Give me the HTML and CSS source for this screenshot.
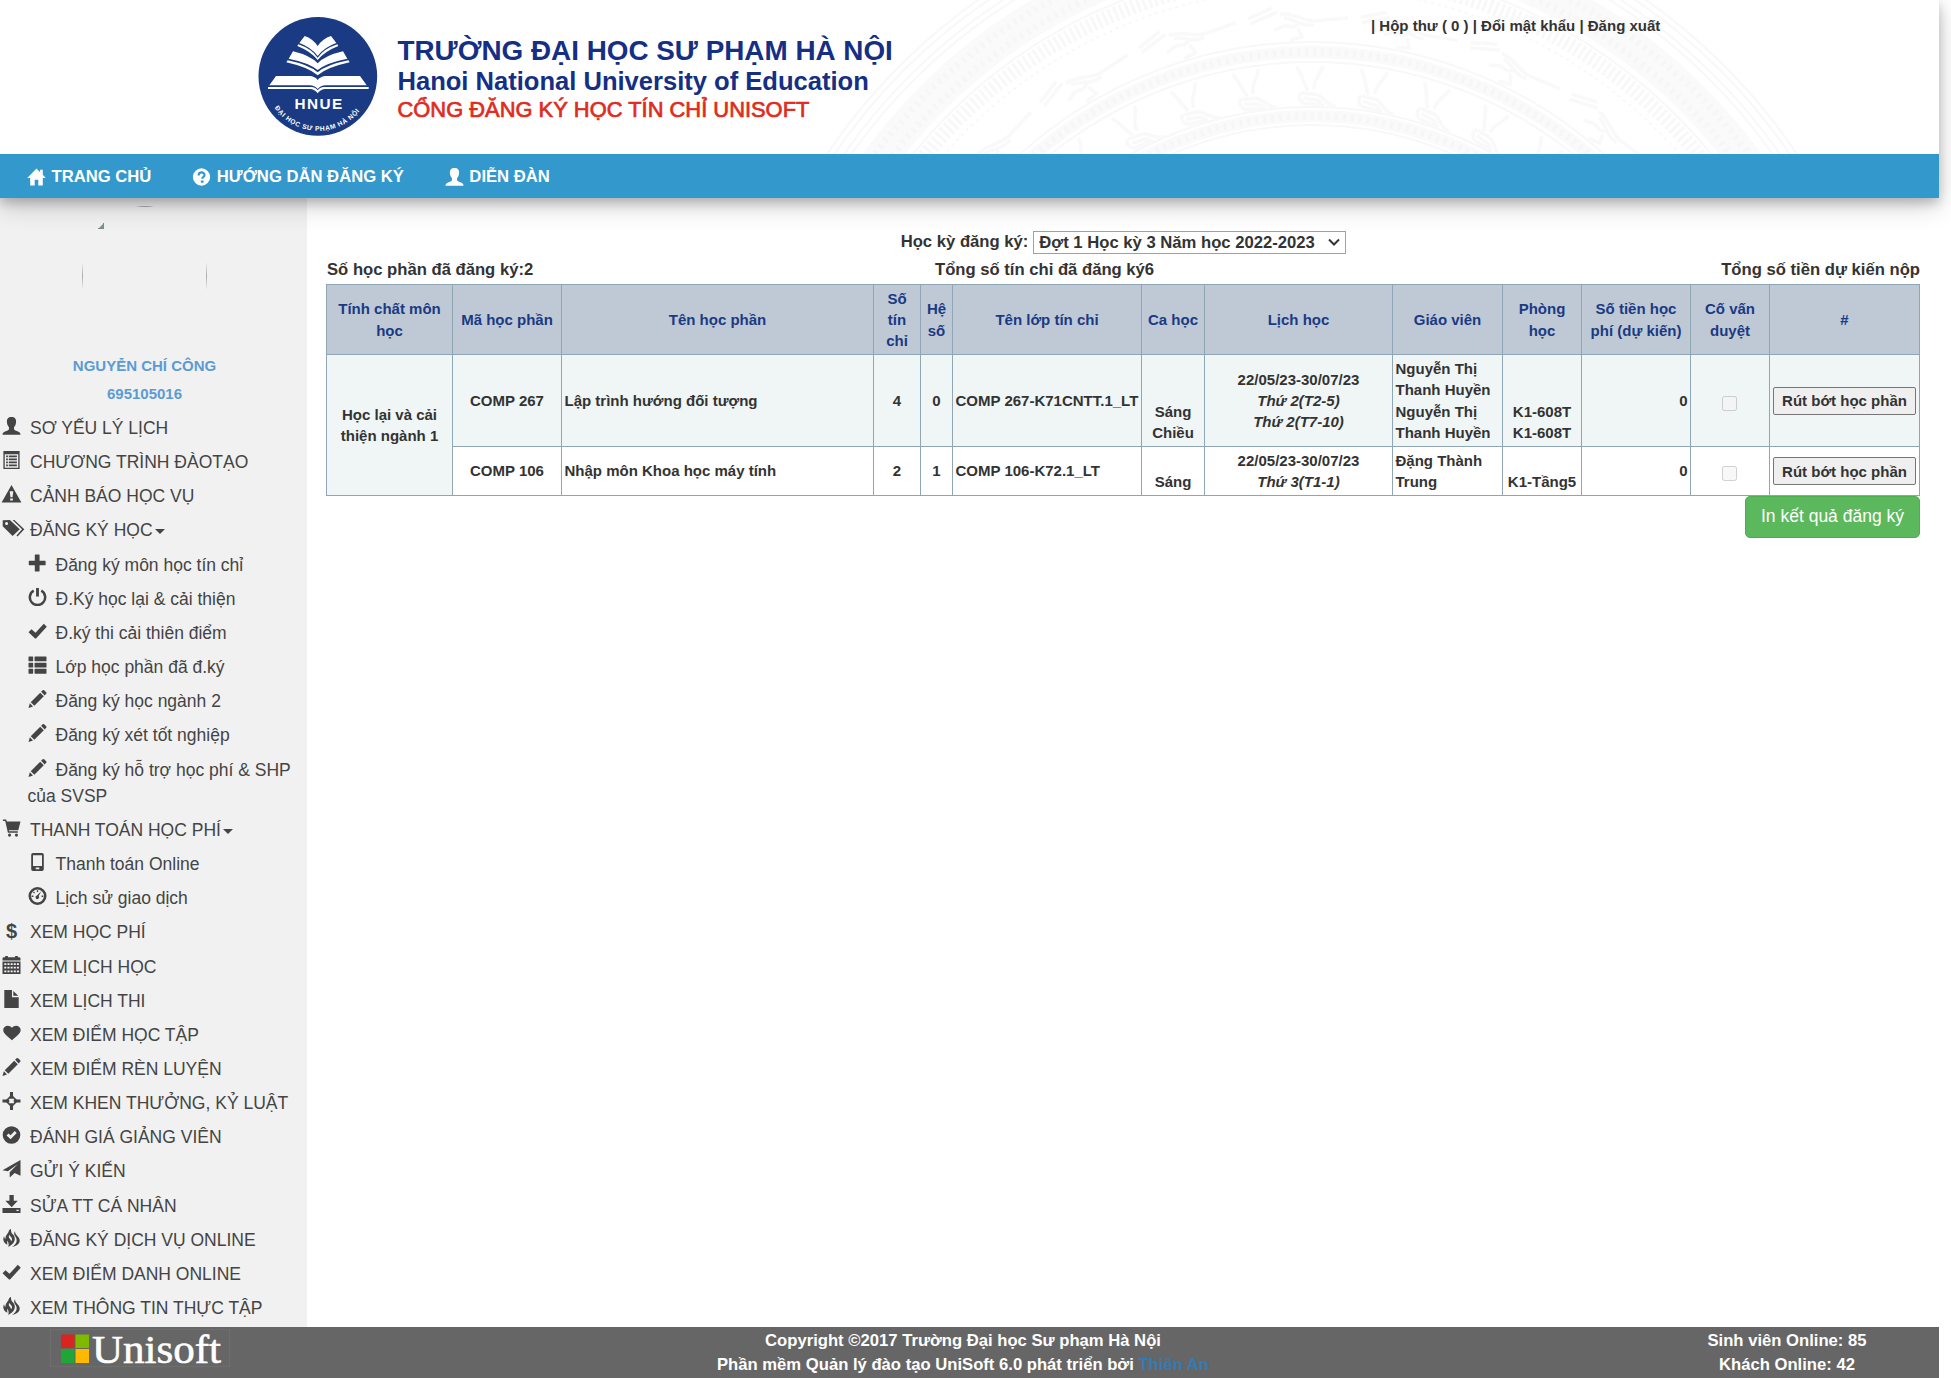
FILE: index.html
```html
<!DOCTYPE html>
<html lang="vi">
<head>
<meta charset="utf-8">
<title>Cổng đăng ký học tín chỉ Unisoft</title>
<link rel="stylesheet" href="styles.css">
</head>
<body>
<svg class="sprite" aria-hidden="true">
  <symbol id="home" viewBox="0 0 20 20"><path d="M10 .5-.3 11H3v8.500h5V13h4v6.500h5V11h3.300l-3.300-3.500V2h-3v2.600z"/></symbol>
  <symbol id="question" viewBox="0 0 20 20"><circle cx="10" cy="10" r="9.600"/><path class="cut" d="M6.800 8.200c0-4.300 6.600-4.300 6.600-.5 0 2.300-2.600 2.300-2.600 4.300M9.300 15.200h3"/></symbol>
  <symbol id="user" viewBox="0 0 20 20"><path d="M10 0C6.200 0 4.700 2.300 4.900 5.500c.2 3 1.200 4.600 2.300 5.800v2.400c-.3 1.500-3.400 2-5.400 2.900C.7 17.200 0 18 0 19.700h20c0-1.700-.7-2.500-1.800-3.100-2-.9-5.100-1.400-5.400-2.900v-2.400c1.100-1.200 2.100-2.800 2.300-5.800C15.300 2.300 13.800 0 10 0z"/></symbol>
  <symbol id="listalt" viewBox="0 0 20 20"><path fill-rule="evenodd" d="M1 0h18v20H1zM2.500 3.500v15h15v-15z"/><path d="M4 5h2v2H4zm3 0h9v2H7zM4 8.300h2v2H4zm3 0h9v2H7zm-3 3.300h2v2H4zm3 0h9v2H7zM4 15h2v2H4zm3 0h9v2H7z"/></symbol>
  <symbol id="warning" viewBox="0 0 22 20"><path fill-rule="evenodd" d="M11 0 22 19.500H0zM9 7l.9 6.500h2.200L13 7zM9.500 15v2.200h3V15z"/></symbol>
  <symbol id="tags" viewBox="0 0 24 20"><path fill-rule="evenodd" d="M0 1.500V8l11 11 8-7.500L8 1zM4.300 3.300a1.700 1.700 0 1 1 0 3.400 1.700 1.700 0 0 1 0-3.400z"/><path d="M11 1h2l11 10.500-7.500 8-1.200-1.200 6.200-6.800z"/></symbol>
  <symbol id="plus" viewBox="0 0 20 20"><path d="M7 1Q7 .5 7.500.5h4.300q.5 0 .5.500v6.500h6.200q.5 0 .5.500v4q0 .5-.5.500h-6.200V19q0 .5-.5.500H7.500Q7 19.500 7 19v-6.500H.8q-.5 0-.5-.5V8q0-.5.500-.5H7z"/></symbol>
  <symbol id="off" viewBox="0 0 20 20"><path class="line" d="M5.800 3a8.500 8.500 0 1 0 8.400 0"/><path d="M8.400 0h3.200v9.500H8.400z"/></symbol>
  <symbol id="ok" viewBox="0 0 20 20"><path d="m17 2 3.300 3.300L8.600 18q-.8.800-1.600 0L0 11.300 3.300 8 7.800 12z"/></symbol>
  <symbol id="thlist" viewBox="0 0 20 20"><path d="M.7.500H4.500q.7 0 .7.700v4q0 .7-.7.700H.7Q0 5.900 0 5.200v-4Q0 .5.700.5zm6.700 0h12q.6 0 .6.700v4q0 .7-.6.700h-12q-.7 0-.7-.7v-4q0-.7.700-.7zM.7 7.400h3.800q.7 0 .7.700v4q0 .7-.7.700H.7q-.7 0-.7-.7v-4q0-.7.700-.7zm6.700 0h12q.6 0 .6.700v4q0 .7-.6.700h-12q-.7 0-.7-.7v-4q0-.7.700-.7zM.7 14.300h3.800q.7 0 .7.700v4q0 .7-.7.700H.7Q0 19.700 0 19v-4q0-.7.700-.7zm6.700 0h12q.6 0 .6.700v4q0 .7-.6.700h-12q-.7 0-.7-.7v-4q0-.7.700-.7z"/></symbol>
  <symbol id="pencil" viewBox="0 0 20 20"><path d="M0 20l1.500-5.200L5 18.200zM2.500 13.500 13 3l4 4L6.500 17.500zM14 2 15.700.4q.9-.8 1.700 0l2.200 2.200q.8.800 0 1.700L18 6z"/></symbol>
  <symbol id="cart" viewBox="0 0 20 20"><path d="M.5.500H4l1 2.200h15l-2.500 9.800H7l.4 1.200H17v1.600H6L3 2.200H.5z"/><circle cx="7.800" cy="17.900" r="1.700"/><circle cx="15.500" cy="17.900" r="1.700"/></symbol>
  <symbol id="phone" viewBox="0 0 20 20"><path fill-rule="evenodd" d="M5 0h10q2 0 2 2v16q0 2-2 2H5q-2 0-2-2V2q0-2 2-2zm0 2.500v12h10v-12zM8 16v2h4v-2z"/></symbol>
  <symbol id="dashboard" viewBox="0 0 20 20"><circle class="line" cx="10" cy="10" r="8.600"/><path d="M9.200 3.500h1.600v2H9.200zM5 6l1-1 1.300 1.300-1 1zM3.500 9.500h2V11h-2zM14.500 9.500h2V11h-2zM14.300 4.700l-3 5.300a2 2 0 1 1-2-.6z"/></symbol>
  <symbol id="calendar" viewBox="0 0 20 20"><path fill-rule="evenodd" d="M0 6h20v14H0zm2 2v2h2.300V8zm3.500 0v2h2.300V8zM9 8v2h2.300V8zm3.500 0v2h2.300V8zM16 8v2h2.300V8zM2 12v2h2.300v-2zm3.500 0v2h2.300v-2zM9 12v2h2.300v-2zm3.500 0v2h2.300v-2zm3.500 0v2h2.300v-2zM2 16v2h2.300v-2zm3.500 0v2h2.300v-2zM9 16v2h2.300v-2zm3.500 0v2h2.300v-2zm3.500 0v2h2.300v-2z"/><path d="M0 5V3Q0 1.500 1.500 1.500H3V0h3v1.500h8V0h3v1.500h1.500Q20 1.500 20 3v2z"/></symbol>
  <symbol id="file" viewBox="0 0 20 20"><path d="M2 0h8.500v8H18v12H2zM12 1l5.500 5.500H12z"/></symbol>
  <symbol id="heart" viewBox="0 0 20 20"><path d="M10.500 18C6.500 14.500.8 11 .8 6.800.8 1.500 7.700.2 10.500 4.300 13.300.2 20.200 1.500 20.200 6.800c0 4.200-5.700 7.700-9.700 11.200z"/></symbol>
  <symbol id="target" viewBox="0 0 20 20"><path class="thin" d="M10 4 16 10 10 16 4 10z"/><path d="M8.300 0h3.400v7.500H8.300zm0 12.500h3.400V20H8.300zM0 8.300h7.500v3.400H0zm12.500 0H20v3.400h-7.500z"/></symbol>
  <symbol id="oksign" viewBox="0 0 20 20"><path fill-rule="evenodd" d="M10 .2a9.800 9.800 0 1 1 0 19.600A9.800 9.800 0 0 1 10 .2zm3.600 5.300L9 10.300 6.700 8.200 4.500 10.500 9 14.700l6.800-6.900z"/></symbol>
  <symbol id="send" viewBox="0 0 20 20"><path d="M20 0v17.500l-6.500-3-5.500 5v-6L17 4.500 6 12.500 0 11.500z"/></symbol>
  <symbol id="download" viewBox="0 0 20 20"><path d="M7.700 0h4.800v6.500H17L10.200 13.500 3.200 6.500h4.500z"/><path fill-rule="evenodd" d="M0 14.500h20V20H0zm15.500 2v1.300H18v-1.300z"/></symbol>
  <symbol id="fire" viewBox="0 0 20 20"><path d="M9.500 0c-.3 3 .5 4.500 2.200 6.200 1.800 1.900 2.300 3.800 1.800 6.300-.6 3-3.500 5.500-7 7.500.8-3.500.3-5-1.200-7-.3 1.500.2 3 0 4.500C1.500 15.500-.3 11.500 1.800 8c.2 1.500.7 2.500 1.500 3C3.200 6.500 6.500 5 7 2.200 7.300 1.200 8.500.3 9.500 0zM7.700 6C6.500 8 7 9.500 8.200 10.800c1 1.100 1.300 2 1.200 3.200 2.200-2.700 1-4.200-.2-5.500C8.300 7.700 7.700 7 7.700 6z"/><path d="M14 2.500c-.2 2.700 1 3.700 2.700 5.500C19 10.300 19.700 12.500 18.700 15c-1 2.500-4 4.200-8.200 5 3-2 4.800-4 5.200-6.500.3-2.500-.5-4-1.700-5.500C12.500 6 12.700 4 14 2.500z"/></symbol>
</svg>

<header class="top">
  <div class="banner">
    <svg class="drum" viewBox="0 0 1100 154" aria-hidden="true">
      <defs>
        <g id="deer"><path d="M531 92c-6-8-7-17-13-23M537 90c-2-10 6-14 7-24M525 94c8 3 12-2 19 3s8 8 16 9M527 99c8 3 12-1 18 4M524 94c-3 5-1 9 4 11h20"/></g>
        <g id="bird"><path d="M498 19l24-11M500 24l27-12M530 14c12-2 20 6 34 7l34-3M534 18c10 0 16 9 30 7M524 30c6 0 8-6 14-4s7 0 10-2M548 28l4 9-12 3"/></g>
      </defs>
      <g class="rings" transform="translate(562 478)">
        <circle r="583"/><circle r="577"/><circle r="569"/><circle r="563"/>
        <circle class="band" r="537"/><circle class="chain" r="544"/><circle class="chain" r="529"/>
        <circle class="comb" r="504"/><circle r="514"/><circle class="dots" r="490"/>
        <circle r="436"/><circle class="band slim" r="426"/><circle class="chain" r="426"/><circle r="416"/>
        <circle r="371"/><circle class="band slim" r="362"/><circle class="chain" r="362"/><circle r="353"/>
      </g>
      <g class="figures">
        <use href="#deer" transform="rotate(-41 562 478)"/><use href="#deer" transform="rotate(-32 562 478)"/><use href="#deer" transform="rotate(-23 562 478)"/><use href="#deer" transform="rotate(-14 562 478)"/><use href="#deer" transform="rotate(-5 562 478)"/><use href="#deer" transform="rotate(4 562 478)"/><use href="#deer" transform="rotate(13 562 478)"/><use href="#deer" transform="rotate(22 562 478)"/><use href="#deer" transform="rotate(31 562 478)"/><use href="#deer" transform="rotate(40 562 478)"/>
        <use href="#bird" transform="rotate(-42 562 478)"/><use href="#bird" transform="rotate(-28 562 478)"/><use href="#bird" transform="rotate(-14 562 478)"/><use href="#bird" transform="rotate(0 562 478)"/><use href="#bird" transform="rotate(14 562 478)"/><use href="#bird" transform="rotate(28 562 478)"/><use href="#bird" transform="rotate(42 562 478)"/>
      </g>
    </svg>
    <svg class="crest" viewBox="0 0 420 408" role="img" aria-label="HNUE">
      <circle cx="203.500" cy="205" r="178" fill="#1a3a83"/>
      <g fill="#fff">
        <path d="M164 84Q188 92 203 114 218 92 243 84L259 105Q222 118 203 144 184 118 148 105z"/>
        <path d="M145 109Q184 122 203 149 222 122 262 109L265 114Q224 130 203 156 182 130 142 114z"/>
        <path d="M129 130Q180 142 203 166 226 142 279 130L292 152Q230 164 203 186 176 164 116 152z"/>
        <path d="M113 157Q176 170 203 193 230 170 295 157L299 163Q230 178 203 202 176 178 109 163z"/>
        <path d="M78 204H178Q195 205 203 216 211 205 228 204H330L350 232H228Q211 233 203 243 195 233 178 232H58z"/>
        <path d="M54 237H184Q197 238 203 247 209 238 222 237H356V243H224Q210 245 203 256 196 245 182 243H54z"/>
        <text x="205" y="302" text-anchor="middle" class="crest-name" textLength="143">HNUE</text>
        <path id="arc" d="M74 299A158 158 0 0 0 336 299" fill="none"/>
        <text class="crest-arc"><textPath href="#arc" textLength="296">ĐẠI HỌC SƯ PHẠM HÀ NỘI</textPath></text>
      </g>
    </svg>
    <div class="titles">
      <div class="t1">TRƯỜNG ĐẠI HỌC SƯ PHẠM HÀ NỘI</div>
      <div class="t2">Hanoi National University of Education</div>
      <div class="t3">CỔNG ĐĂNG KÝ HỌC TÍN CHỈ UNISOFT</div>
    </div>
    <div class="account">| Hộp thư ( 0 ) | Đổi mật khẩu | Đăng xuất</div>
  </div>
  <nav class="nav">
    <a><svg><use href="#home"/></svg>TRANG CHỦ</a>
    <a><svg><use href="#question"/></svg>HƯỚNG DẪN ĐĂNG KÝ</a>
    <a><svg><use href="#user"/></svg>DIỄN ĐÀN</a>
  </nav>
</header>

<div class="page">
  <aside class="side">
    <div class="profile">
      <svg class="avatar" viewBox="0 0 126 126" aria-hidden="true">
        <defs>
          <linearGradient id="fv" x2="0" y2="1"><stop stop-color="#aaa" stop-opacity="0"/><stop offset=".5" stop-color="#aaa"/><stop offset="1" stop-color="#aaa" stop-opacity="0"/></linearGradient>
        </defs>
        <path d="M54 1Q63-1 72 1z" fill="#aaa"/>
        <rect x="0" y="56" width="1" height="28" fill="url(#fv)"/><rect x="124" y="56" width="1" height="28" fill="url(#fv)"/>
        <path d="M16 23 22 17V23z" fill="#789a80"/><path d="M21 17h1v6h-6v-1h5z" fill="#888"/>
      </svg>
      <div>NGUYỄN CHÍ CÔNG</div>
      <div>695105016</div>
    </div>
    <ul class="menu">
      <li><svg><use href="#user"/></svg>SƠ YẾU LÝ LỊCH</li>
      <li><svg><use href="#listalt"/></svg>CHƯƠNG TRÌNH ĐÀOTẠO</li>
      <li><svg class="w20"><use href="#warning"/></svg>CẢNH BÁO HỌC VỤ</li>
      <li><svg class="w22"><use href="#tags"/></svg>ĐĂNG KÝ HỌC<i class="caret"></i></li>
      <li class="sub"><svg><use href="#plus"/></svg>Đăng ký môn học tín chỉ</li>
      <li class="sub"><svg><use href="#off"/></svg>Đ.Ký học lại &amp; cải thiện</li>
      <li class="sub"><svg><use href="#ok"/></svg>Đ.ký thi cải thiên điểm</li>
      <li class="sub"><svg><use href="#thlist"/></svg>Lớp học phần đã đ.ký</li>
      <li class="sub"><svg><use href="#pencil"/></svg>Đăng ký học ngành 2</li>
      <li class="sub"><svg><use href="#pencil"/></svg>Đăng ký xét tốt nghiệp</li>
      <li class="sub"><svg><use href="#pencil"/></svg>Đăng ký hỗ trợ học phí &amp; SHP<br>của SVSP</li>
      <li><svg><use href="#cart"/></svg>THANH TOÁN HỌC PHÍ<i class="caret"></i></li>
      <li class="sub"><svg><use href="#phone"/></svg>Thanh toán Online</li>
      <li class="sub"><svg><use href="#dashboard"/></svg>Lịch sử giao dịch</li>
      <li><b class="usd">$</b>XEM HỌC PHÍ</li>
      <li><svg><use href="#calendar"/></svg>XEM LỊCH HỌC</li>
      <li><svg><use href="#file"/></svg>XEM LỊCH THI</li>
      <li><svg><use href="#heart"/></svg>XEM ĐIỂM HỌC TẬP</li>
      <li><svg><use href="#pencil"/></svg>XEM ĐIỂM RÈN LUYỆN</li>
      <li><svg><use href="#target"/></svg>XEM KHEN THƯỞNG, KỶ LUẬT</li>
      <li><svg><use href="#oksign"/></svg>ĐÁNH GIÁ GIẢNG VIÊN</li>
      <li><svg><use href="#send"/></svg>GỬI Ý KIẾN</li>
      <li><svg><use href="#download"/></svg>SỬA TT CÁ NHÂN</li>
      <li><svg><use href="#fire"/></svg>ĐĂNG KÝ DỊCH VỤ ONLINE</li>
      <li><svg><use href="#ok"/></svg>XEM ĐIỂM DANH ONLINE</li>
      <li><svg><use href="#fire"/></svg>XEM THÔNG TIN THỰC TẬP</li>
    </ul>
  </aside>

  <main class="main">
    <div class="term">Học kỳ đăng ký: <span class="pick"><select><option>Đợt 1 Học kỳ 3 Năm học 2022-2023</option></select><svg viewBox="0 0 12 8"><path d="M1 1.500 6 6.500 11 1.500"/></svg></span></div>
    <div class="totals"><span>Số học phần đã đăng ký:2</span><span>Tổng số tín chỉ đã đăng ký6</span><span>Tổng số tiền dự kiến nộp</span></div>
    <table class="grid">
      <colgroup><col class="c1"><col class="c2"><col class="c3"><col class="c4"><col class="c5"><col class="c6"><col class="c7"><col class="c8"><col class="c9"><col class="c10"><col class="c11"><col class="c12"><col class="c13"></colgroup>
      <tr><th>Tính chất môn học</th><th>Mã học phần</th><th>Tên học phần</th><th>Số<br>tín<br>chỉ</th><th>Hệ số</th><th>Tên lớp tín chỉ</th><th>Ca học</th><th>Lịch học</th><th>Giáo viên</th><th>Phòng học</th><th>Số tiền học phí (dự kiến)</th><th>Cố vấn duyệt</th><th>#</th></tr>
      <tr class="alt"><td rowspan="2">Học lại và cải thiện ngành 1</td><td>COMP 267</td><td class="l">Lập trình hướng đối tượng</td><td>4</td><td>0</td><td class="l">COMP 267-K71CNTT.1_LT</td><td class="low">Sáng<br>Chiều</td><td>22/05/23-30/07/23<br><em>Thứ 2(T2-5)</em><br><em>Thứ 2(T7-10)</em></td><td class="l">Nguyễn Thị<br>Thanh Huyền<br>Nguyễn Thị<br>Thanh Huyền</td><td class="low">K1-608T<br>K1-608T</td><td class="r">0</td><td><input type="checkbox" disabled></td><td><button>Rút bớt học phần</button></td></tr>
      <tr><td>COMP 106</td><td class="l">Nhập môn Khoa học máy tính</td><td>2</td><td>1</td><td class="l">COMP 106-K72.1_LT</td><td class="low">Sáng</td><td>22/05/23-30/07/23<br><em>Thứ 3(T1-1)</em></td><td class="l">Đặng Thành<br>Trung</td><td class="low">K1-Tầng5</td><td class="r">0</td><td><input type="checkbox" disabled></td><td><button>Rút bớt học phần</button></td></tr>
    </table>
    <div class="actions"><a class="print">In kết quả đăng ký</a></div>
  </main>
</div>

<footer class="foot">
  <svg class="unisoft" viewBox="0 0 180 38" role="img" aria-label="Unisoft">
    <rect x=".5" y=".5" width="179" height="37" fill="none" stroke="#6e6e6e"/>
    <path d="M11 5.500h13.500v13.500H11z" fill="#d9251d"/><path d="M25.500 5.500H39v13.500H25.500z" fill="#7fba00"/>
    <path d="M11 20h13.500v14H11z" fill="#1fa637"/><path d="M25.500 20H39v14H25.500z" fill="#ffb900"/>
    <text x="42" y="34" textLength="129" lengthAdjust="spacingAndGlyphs">Unisoft</text>
  </svg>
  <div class="copy">Copyright ©2017 Trường Đại học Sư phạm Hà Nội<br>Phần mềm Quản lý đào tạo UniSoft 6.0 phát triển bởi <a>Thiên An</a></div>
  <div class="online">Sinh viên Online: 85<br>Khách Online: 42</div>
</footer>
</body>
</html>
```
FILE: styles.css
```css
* { box-sizing: border-box; }
body {
  margin: 0;
  height: 1378px;
  overflow: hidden;
  display: flex;
  flex-direction: column;
  background: #fff;
  color: #333;
  font-family: "Liberation Sans", Arial, sans-serif;
}
.sprite { display: none; }
svg { overflow: visible; }

/* Header */
.top {
  position: relative;
  z-index: 1;
  flex: none;
  width: 1939px;
  background: #fff;
  box-shadow: 0 5px 10px rgba(0, 0, 0, .2), 0 7.5px 25px rgba(0, 0, 0, .19);
}
.banner { position: relative; display: flex; height: 154px; padding-left: 250px; }
.drum { position: absolute; left: 750px; top: 0; width: 1100px; height: 154px; overflow: hidden; }
.rings circle { fill: none; stroke: #f8f8f8; stroke-width: 2; }
.rings .band { stroke: #fafafa; stroke-width: 34; }
.rings .slim { stroke-width: 12; }
.rings .chain { stroke: #f6f6f6; stroke-width: 7; stroke-dasharray: 3 5; }
.rings .comb { stroke: #f8f8f8; stroke-width: 15; stroke-dasharray: 3 3; }
.rings .dots { stroke-dasharray: 3 4; }
.figures { fill: none; stroke: #f9f9f9; stroke-width: 3.5; }
.crest { flex: none; width: 140px; height: 136px; margin-top: 8px; }
.crest-name { font-size: 46px; font-weight: bold; }
.crest-arc { font-size: 20px; font-weight: bold; }
.titles { position: relative; flex: 1; padding: 36px 0 0 7.5px; white-space: nowrap; font-weight: bold; }
.t1 { font-size: 27.85px; line-height: 30px; color: #152f85; }
.t2 { font-size: 25.55px; line-height: 31px; color: #152f85; }
.t3 { font-size: 21.9px; line-height: 26px; color: #e02b20; font-weight: normal; -webkit-text-stroke: .7px #e02b20; }
.account { position: relative; width: 568px; padding-top: 15px; font-size: 15px; line-height: 21px; font-weight: bold; }
.nav { display: flex; gap: 41px; height: 44px; padding: 2px 0 0 27px; background: #3398cc; color: #fff; font-size: 16.65px; font-weight: bold; }
.nav a { display: flex; align-items: center; gap: 5.500px; }
.nav svg { width: 19px; height: 18px; margin-top: -1px; fill: #fff; }
.cut { fill: none; stroke: #3398cc; stroke-width: 2.4; }
.line { fill: none; stroke: currentColor; stroke-width: 2.8; }
.thin { fill: none; stroke: currentColor; stroke-width: 1.8; }

/* Sidebar */
.page { display: flex; flex: none; height: 1129px; }
.side { width: 307px; background: #f1f1f1; color: #444; }
.profile { height: 213px; padding: 8px 0 0 82px; font-size: 15px; font-weight: bold; line-height: 28px; color: #5b9bd5; }
.profile div { width: 125px; display: flex; justify-content: center; white-space: nowrap; }
.avatar { display: block; width: 126px; height: 126px; margin-bottom: 20px; }
.menu { margin: 0; padding: 0; list-style: none; font-size: 17.5px; line-height: 26.25px; white-space: nowrap; }
.menu li { padding: 3.96px 0 3.96px 2px; }
.menu .sub { padding-left: 27.5px; }
.menu svg { width: 19px; height: 18px; margin-right: 9px; vertical-align: -1px; fill: currentColor; }
.menu .w20 { width: 21px; margin: 0 8px 0 -1px; }
.menu .w22 { width: 23px; margin-right: 5px; }
.usd { display: inline-block; width: 28px; padding-left: 4px; font-size: 20px; line-height: 20px; }
.caret { display: inline-block; margin-left: 2px; vertical-align: 2px; border: 5px solid transparent; border-top-color: currentColor; border-bottom: 0; }

/* Registration list */
.main { flex: none; width: 1613px; padding: 29px 0 0 19px; font-weight: bold; }
.term { display: flex; justify-content: center; align-items: center; gap: 5px; height: 30px; padding-left: 1px; font-size: 16.65px; }
.pick { display: grid; align-items: center; }
.pick > * { grid-area: 1 / 1; }
.pick svg { justify-self: end; width: 12px; height: 8px; margin-right: 6px; fill: none; stroke: #333; stroke-width: 2; pointer-events: none; }
.term select { appearance: none; width: 313px; height: 23px; padding: 0 0 0 5px; border: 1px solid #a0a0a0; border-radius: 0; background: #fff; color: #333; font: bold 16.65px "Liberation Sans", Arial, sans-serif; }
.totals { display: grid; grid-template-columns: 608px 1fr auto; height: 27px; padding: 1px 0 0 1px; font-size: 16.65px; line-height: 24px; }
.grid { width: 1594px; table-layout: fixed; border-collapse: collapse; font-size: 15px; line-height: 21.43px; text-align: center; }
.c1 { width: 126px; } .c2 { width: 109px; } .c3 { width: 312px; } .c4 { width: 47px; } .c5 { width: 32px; }
.c6 { width: 189px; } .c7 { width: 63px; } .c8 { width: 188px; } .c9 { width: 110px; } .c10 { width: 79px; }
.c11 { width: 109px; } .c12 { width: 79px; } .c13 { width: 150px; }
.grid th, .grid td { padding: 2.5px; border: 1px solid #8fa6b5; }
.grid th { background: #bfc9d6; color: #1a3a83; }
.grid .alt td { background: #f0f5f6; }
.grid .l { text-align: left; white-space: nowrap; }
.grid .r { text-align: right; }
.grid .low { vertical-align: bottom; white-space: nowrap; }
.grid input { width: 15px; height: 15px; margin: 2px 1px 0 0; vertical-align: middle; }
.grid button { width: 143px; height: 28px; padding: 0; border: 1px solid #767676; border-radius: 2px; background: #efefef; color: #333; font: bold 15px "Liberation Sans", Arial, sans-serif; vertical-align: middle; }
.actions { display: flex; justify-content: flex-end; }
.print { width: 175px; height: 42px; border: 1px solid #4cae4c; border-radius: 5px; background: #5cb85c; color: #fff; font-size: 17.5px; font-weight: normal; line-height: 39px; text-align: center; }

/* Footer */
.foot { display: flex; flex: none; width: 1939px; height: 51px; background: #666; color: #fff; font-size: 16.65px; font-weight: bold; line-height: 23.8px; text-align: center; }
.unisoft { width: 180px; height: 38px; margin: 2px 0 0 50px; }
.unisoft text { font: 41px "Liberation Serif", serif; fill: #fff; stroke: #fff; stroke-width: .6px; }
.copy { flex: none; width: 1466px; padding-top: 2px; }
.foot a { color: #337ab7; }
.online { width: 182px; padding-top: 2px; }
```
